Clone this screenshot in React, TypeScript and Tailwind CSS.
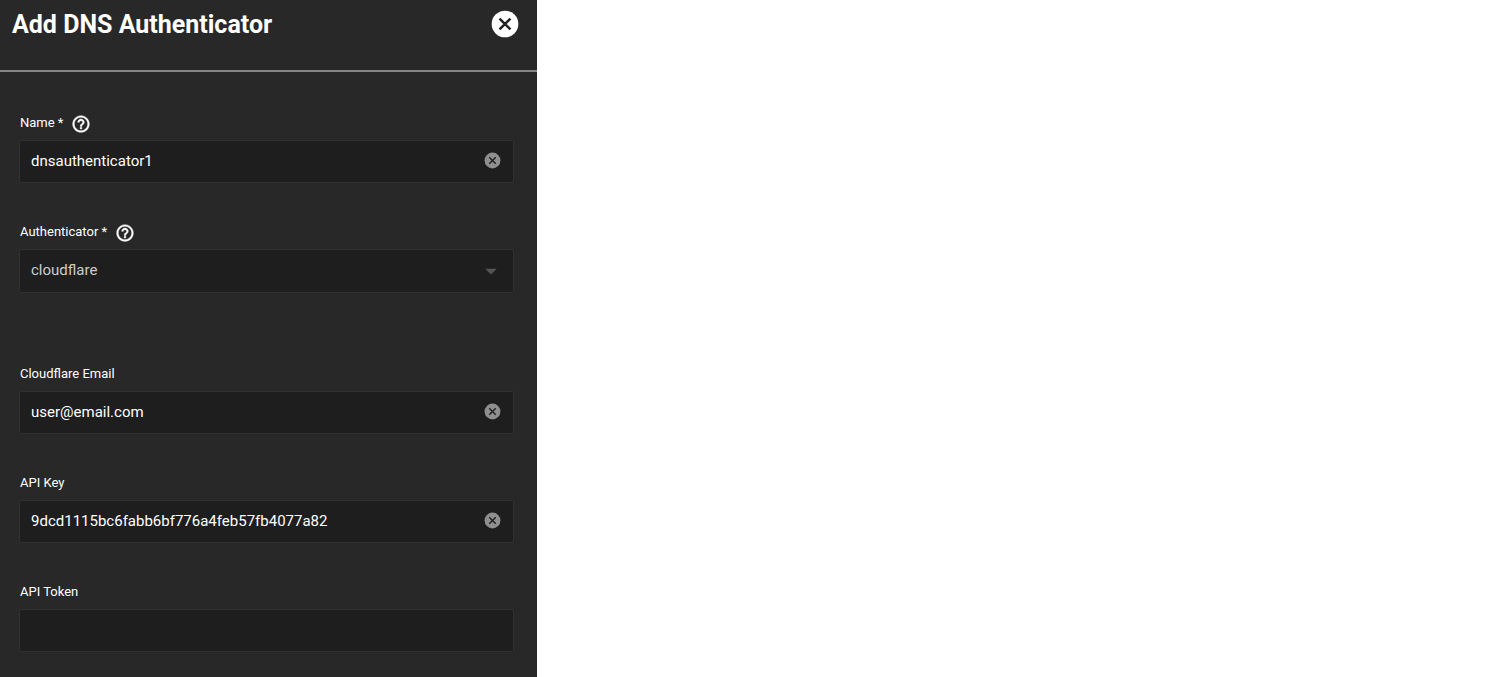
import type { ReactNode } from 'react';
import { useState } from 'react';
import { MdArrowDropDown } from 'react-icons/md';

const CancelIcon = ({ className }: { className: string }) => (
  <svg viewBox="0 0 24 24" fill="none" className={className} aria-hidden="true">
    <circle cx="12" cy="12" r="10" fill="currentColor" />
    <path d="M7.9 7.9l8.2 8.2M16.1 7.9l-8.2 8.2" stroke="#222222" strokeWidth="1.9" />
  </svg>
);

const HelpIcon = ({ className }: { className: string }) => (
  <svg
    viewBox="0 0 24 24"
    fill="currentColor"
    stroke="currentColor"
    strokeWidth="0.5"
    className={className}
    aria-hidden="true"
  >
    <path d="M11 18h2v-2h-2v2zm1-16C6.48 2 2 6.48 2 12s4.48 10 10 10 10-4.48 10-10S17.52 2 12 2zm0 18c-4.41 0-8-3.59-8-8s3.59-8 8-8 8 3.59 8 8-3.59 8-8 8zm0-14c-2.21 0-4 1.79-4 4h2c0-1.1.9-2 2-2s2 .9 2 2c0 2-3 1.75-3 5h2c0-2.25 3-2.5 3-5 0-2.21-1.79-4-4-4z" />
  </svg>
);

interface FieldProps {
  id: string;
  label: string;
  required?: boolean;
  help?: string;
  children: ReactNode;
}

const Field = ({ id, label, required, help, children }: FieldProps) => (
  <div>
    <div className="mb-[5px] flex h-6 items-center gap-2 pl-px">
      <label htmlFor={id} className="text-[13px] leading-5">
        {label}
        {required && ' *'}
      </label>
      {help && (
        <button type="button" aria-label={help} className="pt-px">
          <HelpIcon className="size-5" />
        </button>
      )}
    </div>
    {children}
  </div>
);

interface TextFieldProps {
  id: string;
  label: string;
  initial?: string;
  required?: boolean;
  help?: string;
}

const TextField = ({ id, label, initial = '', required, help }: TextFieldProps) => {
  const [value, setValue] = useState(initial);

  return (
    <Field id={id} label={label} required={required} help={help}>
      <div className="flex h-[43px] items-center rounded-xs border border-[#303030] bg-[#1e1e1e] pr-[11px] pb-0.5 pl-[11px]">
        <input
          id={id}
          type="text"
          value={value}
          onChange={(e) => setValue(e.target.value)}
          className="min-w-0 flex-1 bg-transparent text-[15px] leading-5 outline-none"
        />
        {value && (
          <button type="button" aria-label={`Clear ${label}`} onClick={() => setValue('')}>
            <CancelIcon className="size-[19px] text-[#8f8f8f]" />
          </button>
        )}
      </div>
    </Field>
  );
};

export default function App() {
  return (
    <div className="min-h-screen bg-white">
      <aside className="min-h-screen w-full max-w-[537px] bg-[#282828] font-['Roboto',sans-serif] text-white">
        <header className="flex h-18 items-start justify-between border-b-2 border-[#868686] pt-2 pr-4 pl-3">
          <h1 className="text-[25px] leading-[34px] font-bold">Add DNS Authenticator</h1>
          <button type="button" aria-label="Close">
            <CancelIcon className="size-8" />
          </button>
        </header>

        <form className="pt-[39px] pr-[23px] pb-6 pl-[19px]">
          <div className="flex flex-col gap-[37px]">
            <TextField id="name" label="Name" initial="dnsauthenticator1" required help="Name help" />
            <Field id="authenticator" label="Authenticator" required help="Authenticator help">
              <div className="grid h-11 items-center rounded-xs border border-[#303030] bg-[#1e1e1e]">
                <select
                  id="authenticator"
                  defaultValue="cloudflare"
                  className="col-start-1 row-start-1 h-full w-full appearance-none bg-transparent pr-10 pb-0.5 pl-[11px] text-[15px] leading-5 text-[#cccccc] outline-none"
                >
                  <option value="cloudflare">cloudflare</option>
                  <option value="route53">route53</option>
                </select>
                <MdArrowDropDown className="pointer-events-none col-start-1 row-start-1 mr-2 size-7 justify-self-end text-[#555555]" />
              </div>
            </Field>
          </div>

          <div className="mt-[69px] flex flex-col gap-[37px]">
            <TextField id="cloudflare-email" label="Cloudflare Email" initial="user@email.com" />
            <TextField id="api-key" label="API Key" initial="9dcd1115bc6fabb6bf776a4feb57fb4077a82" />
            <TextField id="api-token" label="API Token" />
          </div>
        </form>
      </aside>
    </div>
  );
}
